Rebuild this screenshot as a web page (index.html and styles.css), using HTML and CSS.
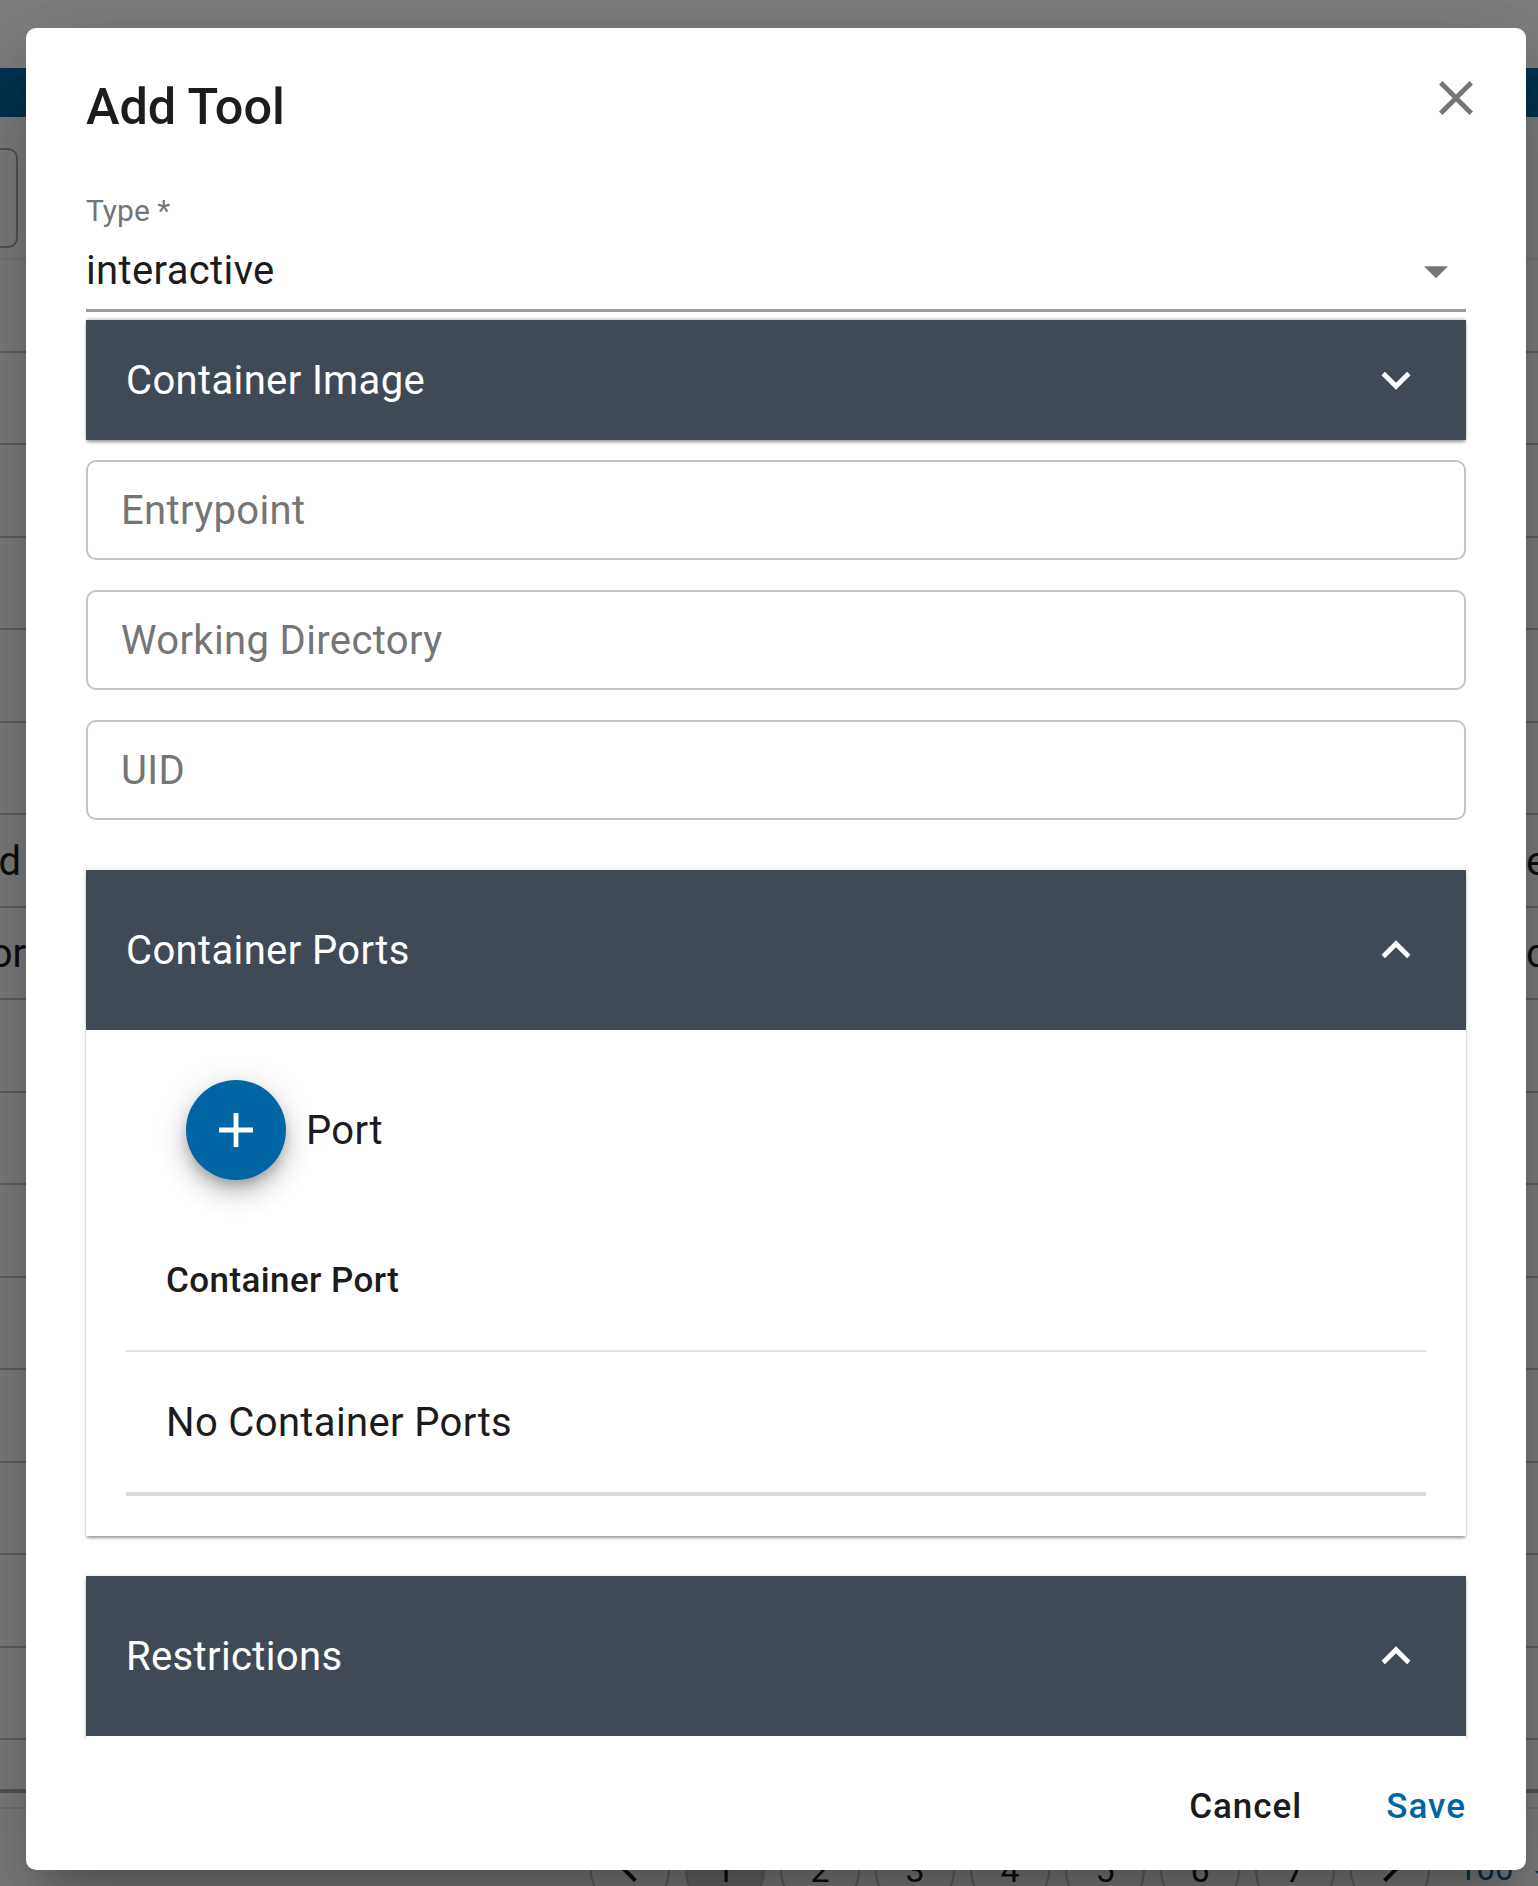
FILE: index.html
```html
<!DOCTYPE html>
<html lang="en">
<head>
<meta charset="utf-8">
<title>Add Tool</title>
<link rel="stylesheet" href="styles.css">
</head>
<body>
<div class="page">
  <div class="appbar"></div>
  <div class="searchbox"></div>
  <div class="rows">
    <div class="row"></div>
    <div class="row"></div>
    <div class="row"></div>
    <div class="row"></div>
    <div class="row"></div>
    <div class="row"></div>
    <div class="row"><span class="cell-left"><span>Jupyterlab Featured</span></span><span class="cell-right">example</span></div>
    <div class="row"><span class="cell-left"><span>Editor</span></span><span class="cell-right">cde</span></div>
    <div class="row"></div>
    <div class="row"></div>
    <div class="row"></div>
    <div class="row"></div>
    <div class="row"></div>
    <div class="row"></div>
    <div class="row"></div>
    <div class="row"></div>
  </div>
  <div class="table-end"></div>
  <div class="pager">
    <span class="pg"><svg class="pg-icon" viewBox="0 0 24 24"><path d="M15.41 7.41 14 6l-6 6 6 6 1.41-1.41L10.83 12z"/></svg></span>
    <span class="pg pg-on">1</span>
    <span class="pg">2</span>
    <span class="pg">3</span>
    <span class="pg">4</span>
    <span class="pg">5</span>
    <span class="pg">6</span>
    <span class="pg">7</span>
    <span class="pg"><svg class="pg-icon" viewBox="0 0 24 24"><path d="M10 6 8.59 7.41 13.17 12l-4.58 4.59L10 18l6-6z"/></svg></span>
    <span class="pg-size">100</span>
    <svg class="pg-caret" viewBox="0 0 24 24"><path d="M7 10l5 5 5-5z"/></svg>
  </div>
  <div class="overlay"></div>
  <div class="modal">
    <header class="modal-head">
      <h2 class="modal-title">Add Tool</h2>
      <svg class="close" viewBox="0 0 24 24"><path d="M19 6.41 17.59 5 12 10.59 6.41 5 5 6.41 10.59 12 5 17.59 6.41 19 12 13.41 17.59 19 19 17.59 13.41 12z"/></svg>
    </header>
    <div class="modal-body">
      <div class="select">
        <div class="select-label">Type *</div>
        <div class="select-value">
          <span>interactive</span>
          <svg class="caret" viewBox="0 0 24 24"><path d="M7 10l5 5 5-5z"/></svg>
        </div>
      </div>
      <section class="panel panel-closed">
        <div class="panel-head panel-head-short">
          <span>Container Image</span>
          <svg class="chev" viewBox="0 0 24 24"><path d="M16.59 8.59 12 13.17 7.41 8.59 6 10l6 6 6-6z"/></svg>
        </div>
      </section>
      <div class="fields">
        <div class="field">Entrypoint</div>
        <div class="field">Working Directory</div>
        <div class="field">UID</div>
      </div>
      <section class="panel panel-ports">
        <div class="panel-head">
          <span>Container Ports</span>
          <svg class="chev" viewBox="0 0 24 24"><path d="M12 8l-6 6 1.41 1.41L12 10.83l4.59 4.58L18 14z"/></svg>
        </div>
        <div class="panel-content">
          <div class="add-row">
            <span class="fab"><svg class="fab-icon" viewBox="0 0 24 24"><path d="M19 13h-6v6h-2v-6H5v-2h6V5h2v6h6z"/></svg></span>
            <span class="add-label">Port</span>
          </div>
          <div class="th">Container Port</div>
          <div class="td">No Container Ports</div>
        </div>
      </section>
      <section class="panel panel-restrict">
        <div class="panel-head">
          <span>Restrictions</span>
          <svg class="chev" viewBox="0 0 24 24"><path d="M12 8l-6 6 1.41 1.41L12 10.83l4.59 4.58L18 14z"/></svg>
        </div>
        <div class="panel-rest"></div>
      </section>
    </div>
    <footer class="modal-foot">
      <span class="btn">Cancel</span>
      <span class="btn btn-primary">Save</span>
    </footer>
  </div>
</div>
</body>
</html>
```
FILE: styles.css
```css
* { box-sizing: border-box; }
html, body { margin: 0; padding: 0; }
body { font-family: Roboto, "Liberation Sans", sans-serif; color: #1c1c1c; background: #fff; }

.page { position: relative; width: 1538px; height: 1886px; padding-top: 68px; overflow: hidden; background: #fff; }

.appbar { height: 49px; background: #0066a3; }

.searchbox { width: 18px; height: 100px; margin-top: 31px; border: 2px solid #aaa; border-left: 0; border-radius: 0 10px 10px 0; }

.rows { margin-top: 10px; border-top: 2px solid #ececec; }
.row { display: flex; justify-content: space-between; align-items: center; height: 92.53px; padding-top: 2px; border-bottom: 2px solid #c4c4c4; font-size: 40px; white-space: nowrap; overflow: hidden; }
.cell-left { display: flex; justify-content: flex-end; width: 26px; overflow: hidden; flex: none; }
.row:nth-child(7) .cell-left { width: 21px; }
.cell-left span { flex: none; }
.cell-right { width: 14px; flex: none; overflow: hidden; margin-right: -2px; }

.table-end { height: 20px; margin-top: 49px; border-top: 4px solid #aaa; border-bottom: 2px solid #e6e6e6; }

.pager { display: flex; align-items: center; gap: 15px; margin-top: 21px; padding-left: 590px; }
.pg { display: flex; align-items: center; justify-content: center; flex: none; width: 80px; height: 80px; border: 2px solid #c6c6c6; border-radius: 50%; font-size: 34px; }
.pg-on { background: #d4d4d4; }
.pg-icon { width: 48px; height: 48px; fill: #1c1c1c; }
.pg-size { flex: none; margin-left: 13px; margin-top: -3px; font-size: 33px; color: #0066a3; }
.pg-caret { flex: none; width: 48px; height: 48px; fill: #0066a3; margin-left: -8px; margin-top: 10px; }

.overlay { position: absolute; inset: 0; background: rgba(0, 0, 0, .5); }

.modal { position: absolute; left: 26px; top: 28px; width: 1500px; height: 1842px; display: flex; flex-direction: column; background: #fff; border-radius: 10px;
  box-shadow: 0 26px 36px -16px rgba(0, 0, 0, .2), 0 58px 90px 7px rgba(0, 0, 0, .14), 0 22px 110px 19px rgba(0, 0, 0, .12); }

.modal-head { display: flex; justify-content: space-between; align-items: flex-start; flex: none; height: 163px; padding: 46px 41px 0 60px; }
.modal-title { margin: 0; font-size: 50.4px; line-height: 66px; font-weight: 500; color: #1c1c1c; }
.close { width: 58px; height: 58px; fill: #757575; margin-top: -5px; }

.modal-body { flex: 1; min-height: 0; overflow: hidden; padding: 0 60px; }

.select-label { height: 41px; font-size: 30px; line-height: 39px; color: #757575; }
.select-value { display: flex; justify-content: space-between; align-items: center; height: 80px; border-bottom: 3px solid #9c9c9c; font-size: 40px; letter-spacing: .36px; }
.caret { width: 58px; height: 58px; fill: #757575; margin-right: 1px; margin-top: 1px; }

.panel { background: #fff; box-shadow: 0 3px 3px -1px rgba(0,0,0,.35), 0 1px 5px 0 rgba(0,0,0,.08), 0 0 4px 0 rgba(0,0,0,.08); }
.panel-closed { margin-top: 8px; box-shadow: 0 3px 3px -1px rgba(0,0,0,.35), 0 1px 6px 0 rgba(0,0,0,.12), 0 -2px 3px -1px rgba(0,0,0,.2); }
.panel-head { display: flex; justify-content: space-between; align-items: center; height: 160px; padding: 0 41px 0 40px; background: #404a56; color: #fff; font-size: 40px; letter-spacing: .36px; }
.panel-head-short { height: 120px; }
.chev { width: 58px; height: 58px; fill: #fff; }

.fields { display: flex; flex-direction: column; gap: 30px; margin-top: 20px; }
.field { display: flex; align-items: center; height: 100px; padding: 0 33px; border: 2px solid #c4c4c4; border-radius: 10px; font-size: 40px; letter-spacing: .36px; color: #757575; }

.panel-ports { margin-top: 50px; }
.panel-content { padding: 50px 40px 40px; }
.add-row { display: flex; align-items: center; gap: 20px; padding-left: 60px; }
.fab { display: flex; align-items: center; justify-content: center; width: 100px; height: 100px; border-radius: 50%; background: #0066a3;
  box-shadow: 0 7px 12px -3px rgba(0,0,0,.25), 0 14px 24px 2px rgba(0,0,0,.14), 0 5px 30px 4px rgba(0,0,0,.1); }
.fab-icon { width: 58px; height: 58px; fill: #fff; }
.add-label { font-size: 40px; letter-spacing: .36px; }

.th { display: flex; align-items: center; height: 142px; margin-top: 30px; padding: 0 40px; border-bottom: 2px solid #dfdfdf; font-size: 35px; font-weight: 500; letter-spacing: .4px; }
.td { display: flex; align-items: center; height: 144px; padding: 0 40px; border-bottom: 4px solid #dadada; font-size: 40px; letter-spacing: .36px; }

.panel-restrict { margin-top: 40px; }
.panel-rest { height: 60px; }

.modal-foot { display: flex; justify-content: flex-end; align-items: center; gap: 84px; flex: none; height: 131px; padding: 4px 60px 0 0; }
.btn { font-size: 35px; font-weight: 500; letter-spacing: 1px; color: #1c1c1c; }
.btn-primary { color: #0066a3; }
```
